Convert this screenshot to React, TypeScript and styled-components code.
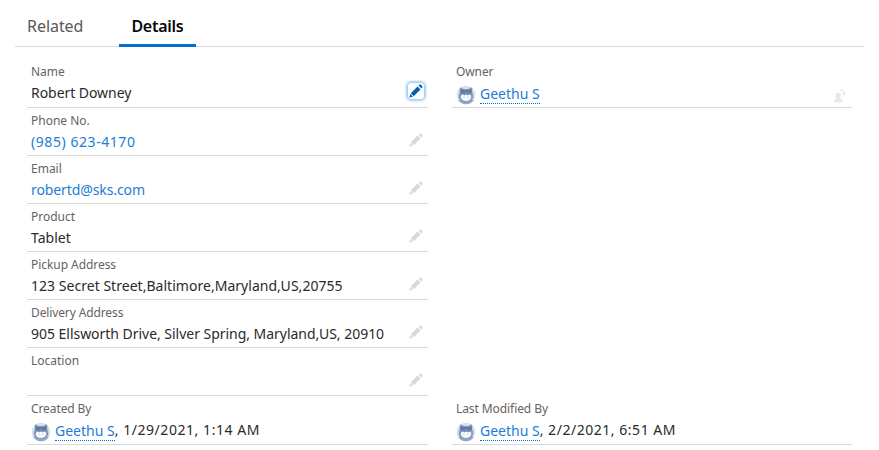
import React, { type ReactNode } from "react";
import styled, { createGlobalStyle, css } from "styled-components";

const GlobalStyle = createGlobalStyle`
  * { box-sizing: border-box; }
  body {
    margin: 0;
    background: #fff;
    color: #1c1c1c;
    font-family: "Noto Sans", "Open Sans", sans-serif;
    font-size: 14px;
  }
`;

const Page = styled.main`
  width: 879px;
  height: 450px;
  padding: 6px 15px 0;
  overflow: hidden;
`;

const TabBar = styled.nav`
  display: flex;
  gap: 24px;
  height: 41px;
  border-bottom: 1px solid #dddbda;
`;

const Tab = styled.a<{ $active?: boolean; $track?: number }>`
  height: 41px;
  padding: 0 12px;
  font-size: 16px;
  line-height: 41px;
  letter-spacing: ${({ $track = 0 }) => $track}px;
  color: #5a5856;
  ${({ $active }) =>
    $active &&
    css`
      width: 77px;
      color: #080707;
      font-weight: 600;
      border-bottom: 3px solid #0070d2;
    `}
`;

const Record = styled.section`
  display: grid;
  grid-template-columns: 401px 400px;
  column-gap: 24px;
  grid-template-rows: 49px repeat(6, 48px) 49px;
  padding: 12px 0 0 12px;
`;

const FieldBox = styled.div<{ $left?: boolean }>`
  grid-column: ${({ $left }) => ($left ? 1 : 2)};
  display: flex;
  justify-content: space-between;
  padding: 5px 4px 0;
  border-bottom: 1px solid #d8d8d8;
`;

const FieldText = styled.div`
  display: flex;
  flex-direction: column;
  gap: 3px;
`;

const Label = styled.span<{ $track?: number }>`
  height: 16px;
  font-size: 12px;
  line-height: 16px;
  letter-spacing: ${({ $track = 0 }) => $track}px;
  color: #656361;
  white-space: nowrap;
`;

const Value = styled.span<{ $track?: number }>`
  height: 20px;
  line-height: 20px;
  letter-spacing: ${({ $track = 0 }) => $track}px;
  color: #2b2a29;
  white-space: nowrap;
`;

const ValueLink = styled(Value).attrs({ as: "a" })`
  color: #1c7dd8;
`;

const UserLine = styled.div`
  display: flex;
  height: 22px;
`;

const UserLink = styled.a`
  height: 20px;
  margin: 1px 0 0 4px;
  line-height: 20px;
  color: #1c7dd8;
  border-bottom: 1px dotted #0070d2;
`;

const AvatarSlot = styled.span`
  width: 20px;
  height: 20px;
  margin-top: 2px;
`;

const EditButton = styled.span<{ $focused?: boolean; $low?: boolean }>`
  display: flex;
  align-items: center;
  justify-content: center;
  width: 18px;
  height: 18px;
  margin: ${({ $low }) => ($low ? "23px -1px 0 0" : "18px -1px 0 0")};
  color: #d9d8d7;
  ${({ $focused }) =>
    $focused &&
    css`
      color: #005fb2;
      border-radius: 4px;
      border: 1px solid #a3d0f5;
      box-shadow: 0 0 3px #4a9fe3;
    `}
`;

const Pencil = () => (
  <svg width="14" height="14" viewBox="0 0 14 14" fill="currentColor">
    <path d="M8.6 2.5 11.5 5.4 4.7 12.2 1.8 9.3ZM9.5 1.6 10.6.6Q11.1.2 11.6.6L13.3 2.3Q13.7 2.8 13.3 3.3L12.4 4.4ZM1.3 10 4 12.7.9 13.4Q.4 13.4.5 12.9Z" />
  </svg>
);

const ChangeOwner = () => (
  <svg width="14" height="14" viewBox="0 0 14 14" fill="#e9e8e7">
    <ellipse cx="5.2" cy="6.4" rx="2.7" ry="3" />
    <path d="M4 8h2.4v1.6l2.6 1q.9.4.9 1.4v.6q0 .6-.6.6H1.5q-.6 0-.6-.6V12q0-1 .9-1.4L4 9.6Z" />
    <path d="M6.8 1.2h1.4q2.8 0 2.8 2.6V5" fill="none" stroke="#e9e8e7" strokeWidth="1.3" />
    <path d="M8.8 4.1h4.6l-2.3 2.4Z" />
  </svg>
);

const Avatar = () => (
  <AvatarSlot>
    <svg width="20" height="20" viewBox="0 0 20 20">
      <circle cx="10" cy="10" r="9.3" fill="#d6e0ed" />
      <path d="M2.6 14.8h14.8l.2.5Q15 19.3 10 19.3T2.4 15.3Z" fill="#92a8cb" />
      <path d="M3.8 3.4q0-1.3 1.2-.8l2.6 1.5h4.8L15 2.6q1.2-.5 1.2.8v4.1q1.8 2.6.9 5.4-1.8 4-7.1 4T2.9 12.9q-.9-2.8.9-5.4Z" fill="#8399be" />
      <path d="M4.3 3.9 7.6 5h4.8l3.3-1.1v4.4H4.3Z" fill="#627aa3" />
      <ellipse cx="10" cy="11.9" rx="5.2" ry="4.2" fill="#f8fafd" />
      <path d="M5.1 10.3 6.4 8.1h7.2l1.3 2.2-2.2-.8-1.2.9-1.5-1.1-1.5 1.1-1.2-.9Z" fill="#7288ab" />
      <circle cx="7.9" cy="12.3" r=".6" fill="#aab9d1" />
      <circle cx="12.1" cy="12.3" r=".6" fill="#aab9d1" />
    </svg>
  </AvatarSlot>
);

type FieldProps = {
  label: string;
  track?: number;
  left?: boolean;
  action?: ReactNode;
  children?: ReactNode;
};

const Field = ({ label, track, left, action, children }: FieldProps) => (
  <FieldBox $left={left}>
    <FieldText>
      <Label $track={track}>{label}</Label>
      {children}
    </FieldText>
    {action}
  </FieldBox>
);

const User = ({ stamp, track }: { stamp?: string; track?: number }) => (
  <UserLine>
    <Avatar />
    <UserLink>Geethu S</UserLink>
    {stamp && <Value $track={track}>{stamp}</Value>}
  </UserLine>
);

const OwnerRow = styled.div`
  display: contents;
  & > div { grid-row: 1; }
`;

const AuditRow = styled.div`
  display: contents;
  & > div { grid-row: 8; }
`;

const edit = <EditButton><Pencil /></EditButton>;

export default function App() {
  return (
    <Page>
      <GlobalStyle />
      <TabBar>
        <Tab $track={-0.05}>Related</Tab>
        <Tab $active $track={-0.25}>Details</Tab>
      </TabBar>
      <Record>
        <OwnerRow>
          <Field left label="Name" action={<EditButton $focused><Pencil /></EditButton>}>
            <Value $track={-0.05}>Robert Downey</Value>
          </Field>
          <Field label="Owner" track={-0.1} action={<EditButton $low><ChangeOwner /></EditButton>}>
            <User />
          </Field>
        </OwnerRow>
        <Field left label="Phone No." action={edit}>
          <ValueLink $track={0.56}>(985) 623-4170</ValueLink>
        </Field>
        <Field left label="Email" action={edit}>
          <ValueLink $track={-0.1}>robertd@sks.com</ValueLink>
        </Field>
        <Field left label="Product" action={edit}>
          <Value>Tablet</Value>
        </Field>
        <Field left label="Pickup Address" track={-0.06} action={edit}>
          <Value $track={0.03}>123 Secret Street,Baltimore,Maryland,US,20755</Value>
        </Field>
        <Field left label="Delivery Address" track={-0.12} action={edit}>
          <Value $track={-0.03}>905 Ellsworth Drive, Silver Spring, Maryland,US, 20910</Value>
        </Field>
        <Field left label="Location" action={edit} />
        <AuditRow>
          <Field left label="Created By" track={-0.1}>
            <User stamp=", 1/29/2021, 1:14 AM" track={0.55} />
          </Field>
          <Field label="Last Modified By" track={-0.08}>
            <User stamp=", 2/2/2021, 6:51 AM" track={0.53} />
          </Field>
        </AuditRow>
      </Record>
    </Page>
  );
}
